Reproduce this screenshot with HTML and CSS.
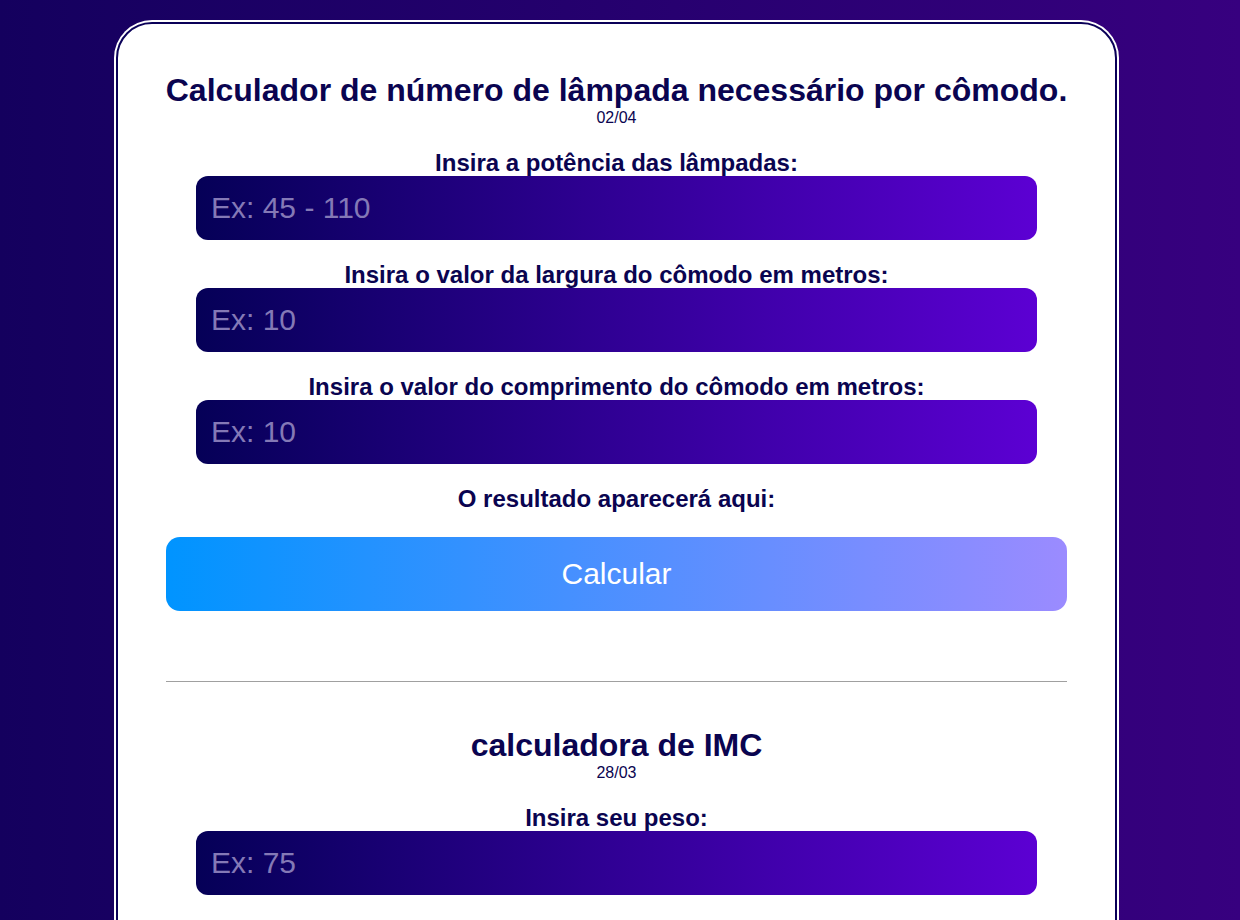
FILE: index.html
```html
<!DOCTYPE html>
<html lang="pt-BR">
<head>
<meta charset="utf-8">
<title>Calculadoras</title>
<link rel="stylesheet" href="styles.css">
</head>
<body>
<main class="card">
  <section class="calc">
    <h1 class="calc-title">Calculador de número de lâmpada necessário por cômodo.</h1>
    <p class="calc-date">02/04</p>
    <label class="field-label" for="pot">Insira a potência das lâmpadas:</label>
    <input class="field-input" id="pot" type="text" placeholder="Ex: 45 - 110">
    <label class="field-label" for="larg">Insira o valor da largura do cômodo em metros:</label>
    <input class="field-input" id="larg" type="text" placeholder="Ex: 10">
    <label class="field-label" for="comp">Insira o valor do comprimento do cômodo em metros:</label>
    <input class="field-input" id="comp" type="text" placeholder="Ex: 10">
    <p class="result">O resultado aparecerá aqui:</p>
    <button class="calc-btn" type="button">Calcular</button>
  </section>
  <hr class="divider">
  <section class="calc">
    <h1 class="calc-title">calculadora de IMC</h1>
    <p class="calc-date">28/03</p>
    <label class="field-label" for="peso">Insira seu peso:</label>
    <input class="field-input" id="peso" type="text" placeholder="Ex: 75">
  </section>
</main>
</body>
</html>
```
FILE: styles.css
```css
html {
  background: linear-gradient(90deg, #14005e 0%, #37007f 100%);
  min-height: 100%;
}
body {
  margin: 0;
  padding: 22px 0 40px 116px;
  font-family: "Liberation Sans", Arial, sans-serif;
  color: #0a0450;
}
.card {
  width: 1001px;
  box-sizing: border-box;
  background: #fff;
  border: 2px solid #0a0058;
  border-radius: 36px;
  box-shadow: 0 0 0 2px #fff;
  padding: 48px 48px 120px;
}
.calc {
  display: flex;
  flex-direction: column;
  align-items: center;
}
.calc-title {
  margin: 0;
  font-size: 32px;
  font-weight: bold;
  line-height: 37px;
  text-align: center;
  white-space: nowrap;
}
.calc-date {
  margin: 0 0 22px;
  font-size: 16px;
  line-height: 18px;
}
.field-label {
  display: block;
  font-size: 24px;
  font-weight: bold;
  line-height: 27px;
  text-align: center;
}
.field-input {
  display: block;
  width: 841px;
  height: 64px;
  box-sizing: border-box;
  margin: 0 0 21px;
  padding: 0 15px;
  border: none;
  border-radius: 12px;
  background: linear-gradient(90deg, #050057 0%, #5c00d3 100%);
  font-family: "Liberation Sans", Arial, sans-serif;
  font-size: 30px;
  color: #fff;
  outline: none;
}
.field-input::placeholder {
  color: #8479b6;
  opacity: 1;
}
.result {
  margin: 0 0 24px;
  font-size: 24px;
  font-weight: bold;
  line-height: 28px;
}
.calc-btn {
  width: 100%;
  height: 74px;
  border: none;
  border-radius: 14px;
  background: linear-gradient(90deg, #0094ff 0%, #9b8bff 100%);
  color: #fff;
  font-family: "Liberation Sans", Arial, sans-serif;
  font-size: 30px;
}
.divider {
  margin: 70px 0 45px;
  border: none;
  border-top: 1px solid #a0a0a0;
  height: 0;
}
```
